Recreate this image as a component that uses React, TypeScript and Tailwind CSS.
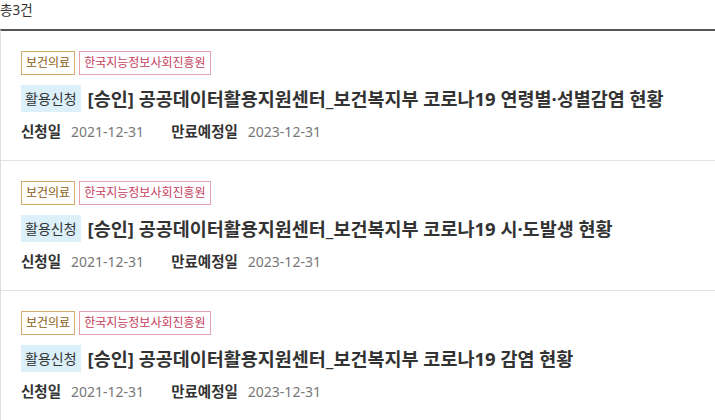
const items = [
  { title: '[승인] 공공데이터활용지원센터_보건복지부 코로나19 연령별·성별감염 현황', applied: '2021-12-31', expires: '2023-12-31' },
  { title: '[승인] 공공데이터활용지원센터_보건복지부 코로나19 시·도발생 현황', applied: '2021-12-31', expires: '2023-12-31' },
  { title: '[승인] 공공데이터활용지원센터_보건복지부 코로나19 감염 현황', applied: '2021-12-31', expires: '2023-12-31' },
]

function Item({ title, applied, expires }: { title: string; applied: string; expires: string }) {
  return (
    <div className="h-[130px] border-b border-[#e2e2e2] px-5 pt-5">
      <div className="flex gap-1">
        <span className="flex h-6 items-center border border-[#cfae6e] px-[4px] text-[12px] text-[#8a5c10]">보건의료</span>
        <span className="flex h-6 items-center border border-[#e3a1ad] px-[4px] text-[12px] text-[#c5405e]">한국지능정보사회진흥원</span>
      </div>
      <div className="mt-[10px] flex items-center gap-[7px]">
        <span className="flex h-[27px] items-center bg-[#dcf0f9] px-1 text-[14px] text-[#333]">활용신청</span>
        <span className="text-[18.5px] font-bold text-[#333]">{title}</span>
      </div>
      <div className="mt-2 flex items-center text-[14.5px]">
        <span className="font-bold text-[#333]">신청일</span>
        <span className="ml-[10px] text-[14px] text-[#777]">{applied}</span>
        <span className="ml-[27px] font-bold text-[#333]">만료예정일</span>
        <span className="ml-[10px] text-[14px] text-[#777]">{expires}</span>
      </div>
    </div>
  )
}

export default function App() {
  return (
    <div className="h-[420px] w-[715px] overflow-hidden bg-white font-['Noto_Sans','Noto_Sans_CJK_KR',sans-serif]">
      <div className="h-[29px] text-[13.5px] leading-[20px] text-[#333]">총3건</div>
      <div className="border-t-2 border-l border-[#555] border-l-[#dedede]">
        {items.map((it, i) => (
          <Item key={i} {...it} />
        ))}
      </div>
    </div>
  )
}
